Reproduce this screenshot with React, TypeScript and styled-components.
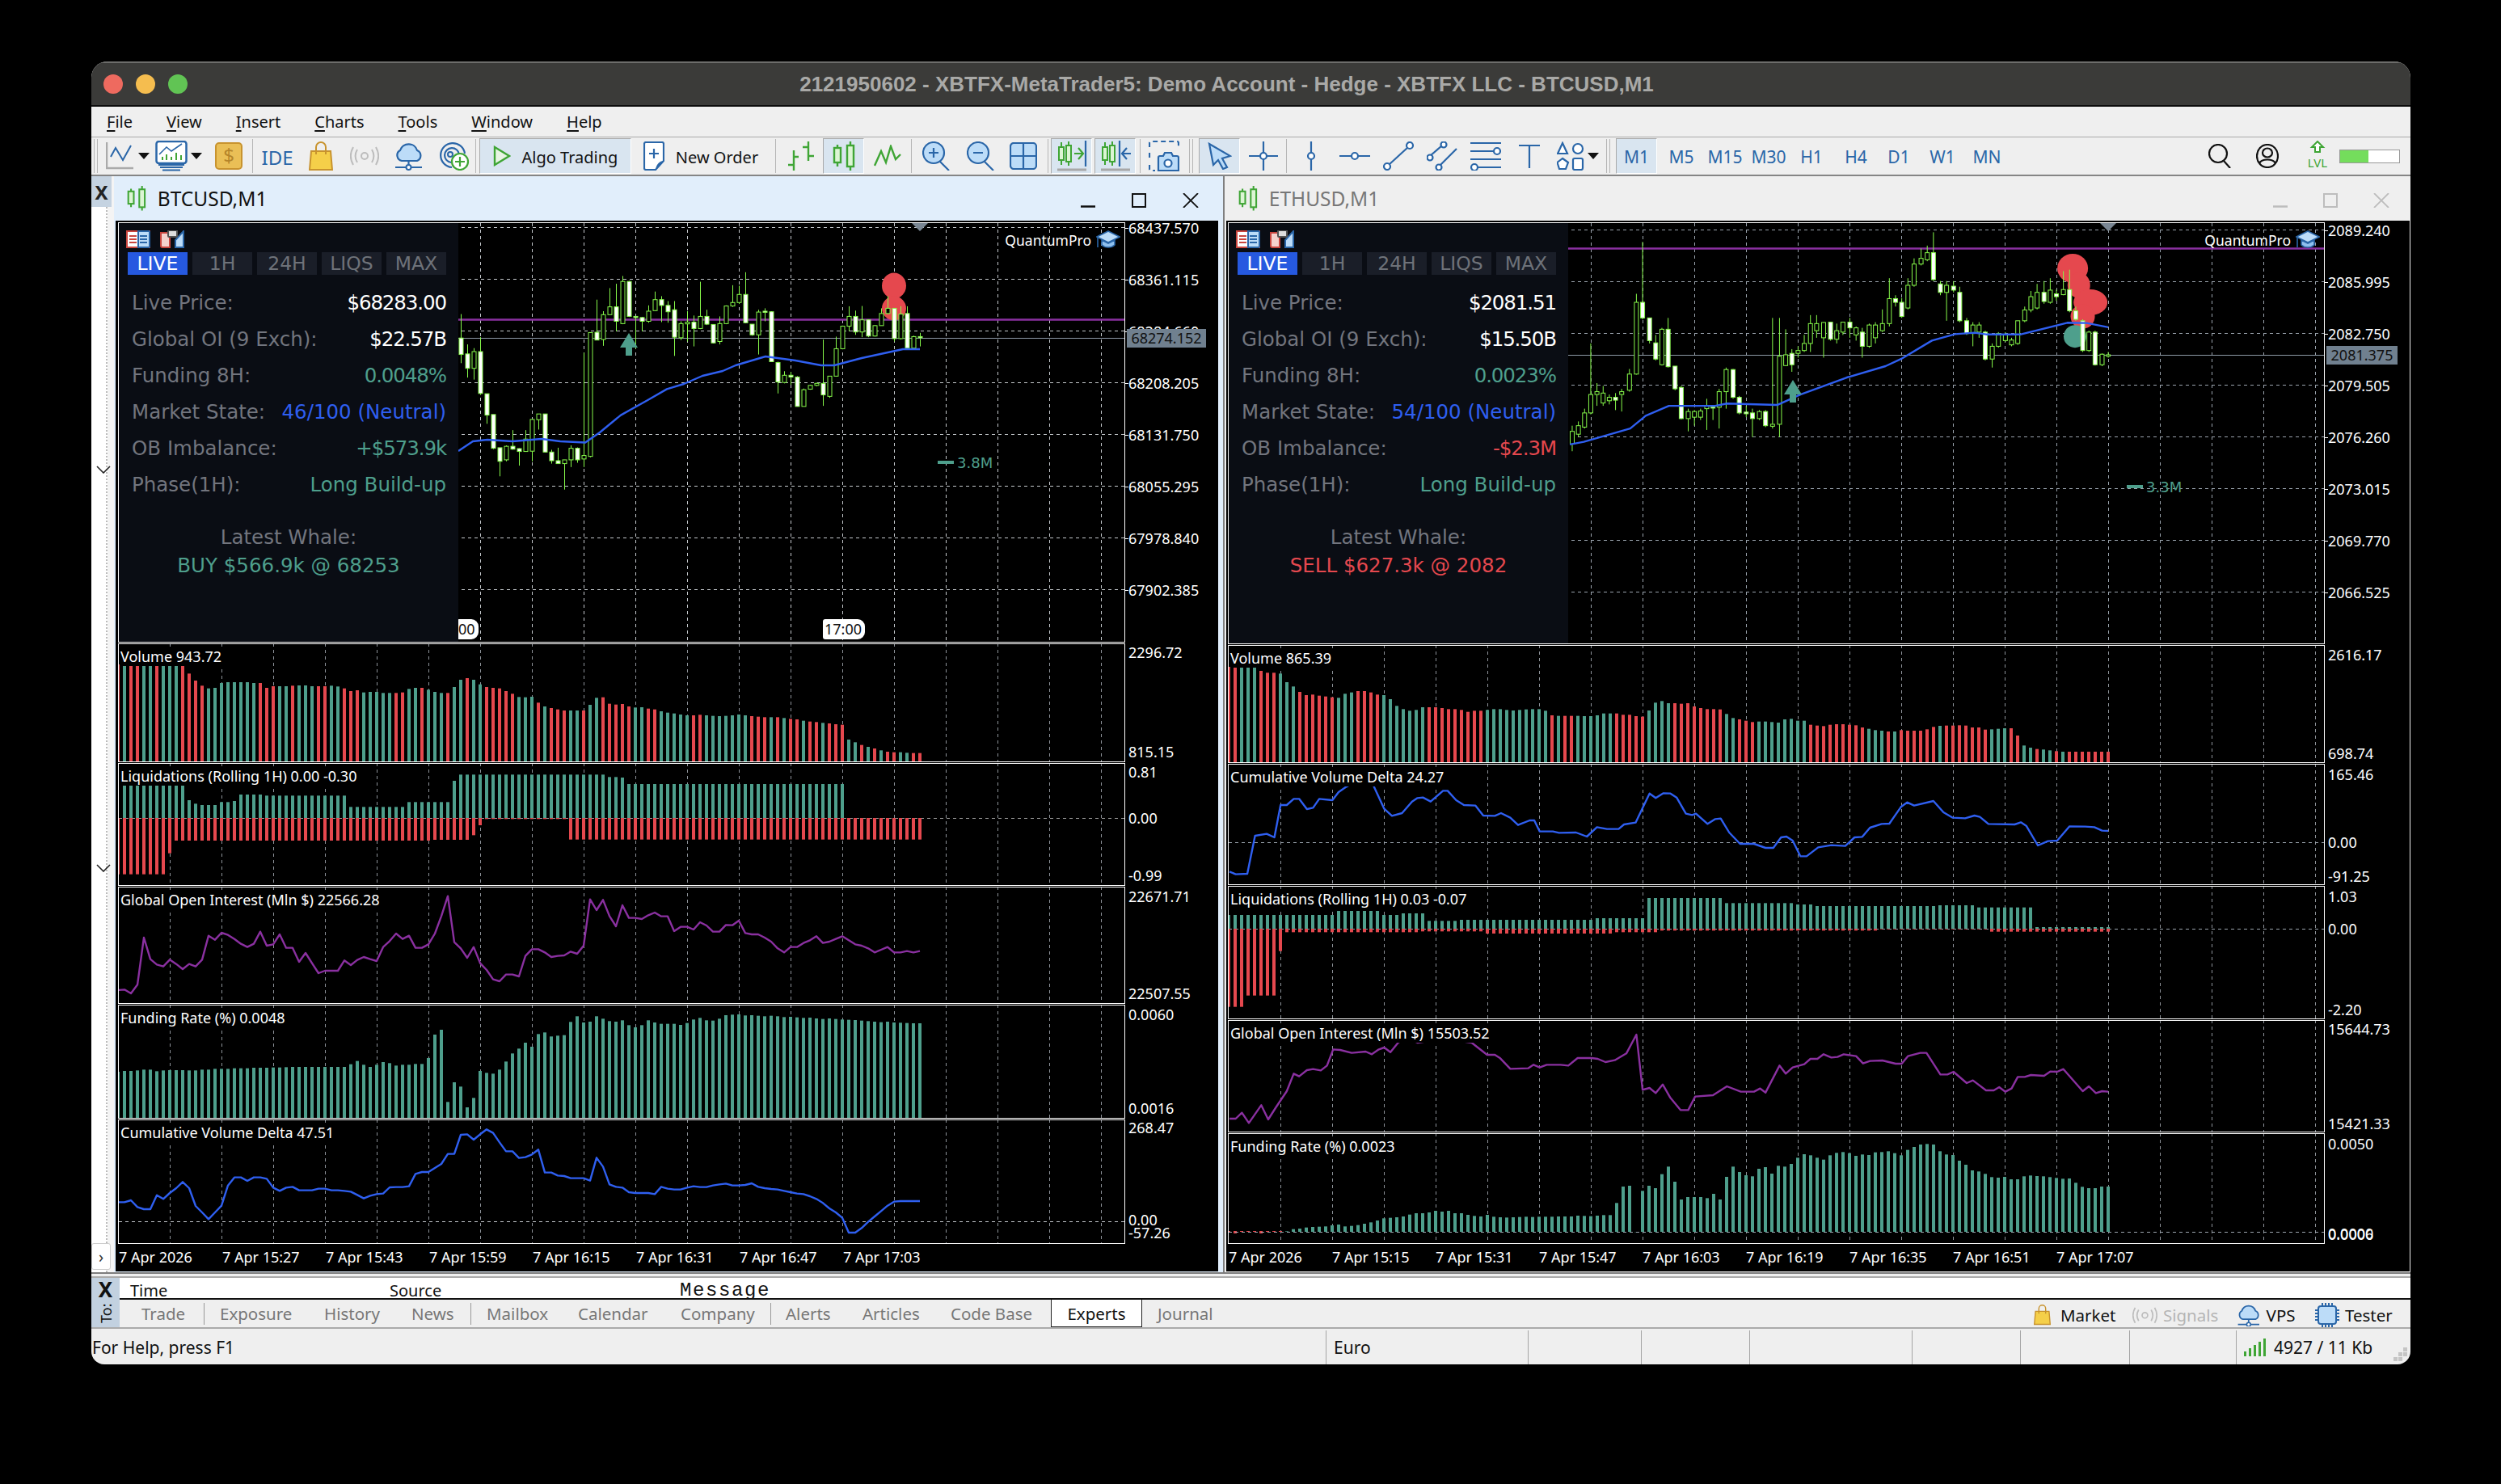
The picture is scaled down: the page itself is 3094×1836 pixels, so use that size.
import * as React from "react";
import styled, { createGlobalStyle } from "styled-components";

const UI = `"Noto Sans", "Liberation Sans", sans-serif`;
const PANEL = `"DejaVu Sans", "Noto Sans", sans-serif`;
const BLUE = "#2a66a8";
const LIGHT = "#bcdcf8";
const GREEN = "#3fa535";
const TEAL = "#4e9f8c";
const RED = "#e5484e";
const LINE_BLUE = "#2f5ff0";
const PURPLE = "#8a30a0";
const WICK = "#86f94a";

const GlobalStyle = createGlobalStyle`
  html, body { margin: 0; background: #000; }
  * { box-sizing: border-box; }
`;

const Page = styled.div`
  width: 3094px;
  height: 1836px;
  background: #000;
  padding: 76px 0 0 113px;
  overflow: hidden;
  font-family: ${UI};
`;

const Window = styled.div`
  width: 2869px;
  height: 1612px;
  display: flex;
  flex-direction: column;
  background: #efefef;
  border-radius: 20px 20px 16px 16px;
  overflow: hidden;
`;

const TitleBar = styled.div`
  height: 56px;
  flex: none;
  background: #3b3b39;
  border-top: 2px solid #6d6d6b;
  border-bottom: 2px solid #0c0c0c;
  display: flex;
  align-items: center;
  position: relative;
  color: #a9a9a7;
  font: bold 26px "Liberation Sans", sans-serif;
  justify-content: center;
  padding-right: 60px;
`;

const Lights = styled.div`
  position: absolute;
  left: 15px;
  top: 14px;
  display: flex;
  gap: 16px;
`;

const Light = styled.span<{ $c: string }>`
  width: 24px;
  height: 24px;
  border-radius: 50%;
  background: ${(p) => p.$c};
`;

const MenuBar = styled.div`
  height: 38px;
  flex: none;
  display: flex;
  align-items: center;
  gap: 42px;
  padding-left: 19px;
  font-size: 20px;
  color: #111;
  border-bottom: 1px solid #aaa;
  u { text-underline-offset: 3px; }
`;

const Toolbar = styled.div`
  height: 48px;
  flex: none;
  display: flex;
  align-items: center;
  border-bottom: 2px solid #858585;
`;

const Tool = styled.div<{ $ml: number; $w: number; $active?: boolean }>`
  flex: none;
  width: ${(p) => p.$w}px;
  height: 44px;
  margin-left: ${(p) => p.$ml}px;
  display: flex;
  align-items: center;
  justify-content: center;
  gap: ${(p) => (p.$w > 100 ? 14 : 4)}px;
  font-size: 20px;
  color: #111;
  background: ${(p) => (p.$active ? "#d9e5f0" : "transparent")};
  border-top: ${(p) => (p.$active ? "1px solid #a9a9a9" : "none")};
  border-left: ${(p) => (p.$active ? "1px solid #a9a9a9" : "none")};
  border-bottom: ${(p) => (p.$active ? "1px solid #fff" : "none")};
  border-right: ${(p) => (p.$active ? "1px solid #fff" : "none")};
  span { padding-top: 2px; }
`;

const Sep = styled.span`
  width: 1px;
  height: 42px;
  background: #b5b5b5;
`;

const Grip = styled.span`
  width: 5px;
  height: 42px;
  border-left: 1px solid #b5b5b5;
  border-right: 1px solid #b5b5b5;
`;

const BlueLabel = styled.span`
  color: ${BLUE};
  font-size: 21px;
  white-space: nowrap;
`;

const IdeLabel = styled(BlueLabel)`
  font-size: 24px;
`;

const LevelBar = styled.div`
  width: 75px;
  height: 17px;
  background: linear-gradient(90deg, #74dd5c 48%, #fff 48%);
  border: 1px solid #999;
`;

const Workspace = styled.div`
  height: 1358px;
  flex: none;
  display: flex;
  border-bottom: 2px solid #7d7d7d;
`;

const NavStrip = styled.div`
  width: 28px;
  flex: none;
  display: flex;
  flex-direction: column;
  background: #f4f4f4;
`;

const NavClose = styled.div`
  height: 38px;
  width: 25px;
  background: #c5d3e1;
  display: flex;
  align-items: center;
  justify-content: center;
  font: bold 24px ${UI};
  color: #222;
`;

const NavBody = styled.div`
  flex: 1;
  width: 20px;
  background: #fff;
  border-right: 2px dotted #bbb;
  display: flex;
  flex-direction: column;
  position: relative;
`;

const NavChevron = styled.svg<{ $mt: number }>`
  margin: ${(p) => p.$mt}px 0 0 6px;
  flex: none;
`;

const NavToggle = styled.div`
  margin-top: auto;
  margin-bottom: 3px;
  width: 24px;
  height: 33px;
  flex: none;
  background: #fff;
  border: 1px solid #ccc;
  border-radius: 3px;
  display: flex;
  align-items: center;
  justify-content: center;
  color: #333;
  font-size: 20px;
`;

const ChartWindow = styled.div<{ $w: number; $active?: boolean }>`
  width: ${(p) => p.$w}px;
  flex: none;
  display: flex;
  flex-direction: column;
  background: ${(p) => (p.$active ? "#e1eefb" : "#efefef")};
  border-left: ${(p) => (p.$active ? "none" : "2px solid #7f7f7f")};
`;

const TabBar = styled.div<{ $active?: boolean; $pl: number }>`
  height: 55px;
  flex: none;
  display: flex;
  align-items: center;
  padding-left: ${(p) => p.$pl}px;
  gap: 14px;
  font-size: 24.5px;
  color: ${(p) => (p.$active ? "#111" : "#777")};
`;

const WinButtons = styled.div<{ $gap: number; $pr: number }>`
  margin-left: auto;
  margin-right: ${(p) => p.$pr}px;
  display: flex;
  gap: ${(p) => p.$gap}px;
  padding-top: 4px;
`;

const Frame = styled.div<{ $ml: number; $pl: number; $w: number }>`
  height: 1300px;
  width: ${(p) => p.$w}px;
  flex: none;
  margin-left: ${(p) => p.$ml}px;
  padding: 2px 0 0 ${(p) => p.$pl}px;
  background: #000;
  display: flex;
  flex-direction: column;
`;

const PaneRow = styled.div<{ $h: number; $mb: number }>`
  height: ${(p) => p.$h}px;
  margin-bottom: ${(p) => p.$mb}px;
  flex: none;
  display: flex;
`;

const Plot = styled.div<{ $w: number }>`
  width: ${(p) => p.$w}px;
  height: 100%;
  flex: none;
  position: relative;
  border: 1px solid #fff;
  overflow: hidden;
  svg { display: block; }
`;

const PaneTitle = styled.div`
  position: absolute;
  left: 2px;
  top: 3px;
  padding-right: 3px;
  background: #000;
  color: #fff;
  font-size: 18px;
  line-height: 24px;
  white-space: nowrap;
`;

const Axis = styled.div`
  flex: 1;
  position: relative;
`;

const AxisLabel = styled.span<{ $y: number; $tick?: boolean }>`
  position: absolute;
  left: 0;
  top: ${(p) => p.$y - 13}px;
  padding-left: 4px;
  color: #fff;
  font-size: 18px;
  line-height: 26px;
  white-space: nowrap;
  &::before {
    content: "";
    display: ${(p) => (p.$tick ? "block" : "none")};
    position: absolute;
    left: 0;
    top: 13px;
    width: 4px;
    height: 1px;
    background: #fff;
  }
`;

const PriceTag = styled.span<{ $y: number; $w: number }>`
  position: absolute;
  left: 2px;
  top: ${(p) => p.$y}px;
  width: ${(p) => p.$w}px;
  height: 23px;
  background: #70808f;
  color: #111;
  font-size: 18px;
  line-height: 23px;
  text-align: center;
`;

const TimeAxis = styled.div<{ $pl: number }>`
  display: flex;
  padding-left: ${(p) => p.$pl}px;
  height: 30px;
  flex: none;
  color: #fff;
  font-size: 18px;
  line-height: 30px;
`;

const TimeCell = styled.span`
  width: 128px;
  flex: none;
  white-space: nowrap;
`;

const Panel = styled.div`
  position: absolute;
  left: 0;
  top: 0;
  bottom: 0;
  width: 420px;
  background: #0a0d14;
  padding: 9px 0 0 11px;
  font-family: ${PANEL};
  font-size: 24.5px;
`;

const PanelIcons = styled.div`
  display: flex;
  gap: 12px;
  height: 22px;
  margin-bottom: 5px;
  margin-left: -2px;
`;

const RangeTabs = styled.div`
  display: flex;
  gap: 6px;
  margin-bottom: 12px;
`;

const RangeTab = styled.span<{ $on?: boolean }>`
  width: 74px;
  height: 28px;
  display: flex;
  align-items: center;
  justify-content: center;
  background: ${(p) => (p.$on ? "#2659e0" : "#1a1e28")};
  color: ${(p) => (p.$on ? "#fff" : "#6e7279")};
  font-size: 23.5px;
`;

const StatRow = styled.div`
  width: 394px;
  height: 45px;
  padding-left: 5px;
  display: flex;
  align-items: center;
  justify-content: space-between;
  color: #72757e;
  white-space: nowrap;
`;

const StatValue = styled.span<{ $c: string; $tight?: boolean }>`
  color: ${(p) => p.$c};
  letter-spacing: ${(p) => (p.$tight ? "-1.1px" : "0")};
`;

const Whale = styled.div<{ $c: string }>`
  width: 398px;
  margin-top: 25px;
  text-align: center;
  line-height: 35px;
  color: #72757e;
  b { display: block; font-weight: normal; color: ${(p) => p.$c}; }
`;

const Brand = styled.div`
  position: absolute;
  right: 5px;
  top: 9px;
  display: flex;
  align-items: center;
  gap: 6px;
  color: #fff;
  font-size: 17.5px;
`;

const TimeTag = styled.span<{ $x: number }>`
  position: absolute;
  left: ${(p) => p.$x}px;
  bottom: 3px;
  height: 25px;
  padding: 0 4px 0 2px;
  background: #fff;
  color: #111;
  font-size: 18px;
  line-height: 25px;
  border-radius: 3px 9px 9px 3px;
`;

const Toolbox = styled.div`
  height: 65px;
  flex: none;
  margin-top: 3px;
  display: flex;
  border-top: 2px solid #aaa;
  border-bottom: 2px solid #aaa;
`;

const ToolboxSide = styled.div`
  width: 35px;
  flex: none;
  background: #c2d1e0;
  display: flex;
  flex-direction: column;
  align-items: center;
  color: #111;
`;

const ToolboxX = styled.span`
  font: bold 26px ${UI};
  line-height: 28px;
`;

const ToolboxName = styled.span`
  writing-mode: vertical-rl;
  transform: rotate(180deg);
  font-size: 18px;
  height: 26px;
  margin-top: 2px;
`;

const ToolboxMain = styled.div`
  flex: 1;
  display: flex;
  flex-direction: column;
`;

const LogHeader = styled.div`
  height: 27px;
  flex: none;
  background: #fff;
  border-bottom: 2px solid #111;
  display: flex;
  align-items: flex-end;
  padding-left: 13px;
  font-size: 20px;
  line-height: 24px;
  color: #111;
  overflow: hidden;
`;

const LogCol = styled.span<{ $w: number; $mono?: boolean }>`
  width: ${(p) => p.$w}px;
  flex: none;
  font-family: ${(p) => (p.$mono ? `"Liberation Mono", monospace` : "inherit")};
  font-size: ${(p) => (p.$mono ? 24 : 20)}px;
  letter-spacing: ${(p) => (p.$mono ? 1.6 : 0)}px;
  position: relative;
  top: 3px;
`;

const TabRow = styled.div`
  flex: 1;
  display: flex;
  align-items: center;
  font-size: 20.5px;
  color: #777;
`;

const BottomTab = styled.span<{ $ml: number; $w: number; $on?: boolean; $sep?: boolean; $low?: boolean }>`
  flex: none;
  width: ${(p) => p.$w}px;
  margin-left: ${(p) => p.$ml}px;
  height: ${(p) => (p.$sep ? 27 : 34)}px;
  line-height: 30px;
  white-space: nowrap;
  display: flex;
  align-items: center;
  gap: 7px;
  padding-top: ${(p) => (p.$low ? 4 : 0)}px;
  align-self: ${(p) => (p.$on ? "flex-start" : "center")};
  justify-content: ${(p) => (p.$on ? "center" : "flex-start")};
  color: ${(p) => (p.$on ? "#111" : "inherit")};
  background: ${(p) => (p.$on ? "#fff" : p.$sep ? "#999" : "transparent")};
  border: ${(p) => (p.$on ? "1px solid #222" : "none")};
  border-top: none;
`;

const DarkLabel = styled.span`
  color: #111;
`;

const MarketLabel = styled(DarkLabel)`
  margin-left: 5px;
`;

const GreyLabel = styled.span`
  color: #b5b5b5;
`;

const StatusBar = styled.div`
  flex: 1;
  display: flex;
  font-size: 21px;
  color: #111;
  position: relative;
  padding-top: 2px;
`;

const StatusCell = styled.div<{ $w: number; $first?: boolean }>`
  width: ${(p) => p.$w}px;
  flex: none;
  display: flex;
  align-items: center;
  gap: 9px;
  padding-left: ${(p) => (p.$first ? 1 : 9)}px;
  border-left: ${(p) => (p.$first ? "none" : "1px solid #a5a5a5")};
`;

const ResizeGrip = styled.svg`
  position: absolute;
  right: 3px;
  bottom: 3px;
`;

/* ---------- toolbar icons ---------- */
const Arrow = () => (
  <svg width="14" height="8" viewBox="0 0 14 8"><path d="M0 0H14L7 8Z" fill="#111" /></svg>
);

const IconChartType = () => (
  <svg width="36" height="36" viewBox="0 0 36 36" fill="none">
    <path d="M1 1V33H34" stroke="#aaa" strokeWidth="2.5" />
    <path d="M6 19L12 8L21 23L31 5" stroke={BLUE} strokeWidth="2" />
  </svg>
);
const IconTablet = () => (
  <svg width="40" height="38" viewBox="0 0 40 38" fill="none">
    <rect x="1.5" y="1" width="37" height="27" rx="3" fill="#fff" stroke={BLUE} strokeWidth="2.5" />
    <path d="M5 17L14 8L20 13L33 4" stroke={BLUE} strokeWidth="1.6" />
    <path d="M9 24V20M14 24V17M20 24V20M26 24V15M32 24V18" stroke={GREEN} strokeWidth="2" />
    <path d="M4 30H36M6 33H34M9 36.5H31" stroke={BLUE} strokeWidth="2" />
  </svg>
);
const IconDollar = () => (
  <svg width="34" height="34" viewBox="0 0 34 34">
    <rect x="1" y="1" width="32" height="32" rx="4" fill="#eabf56" stroke="#c8932e" strokeWidth="2" />
    <text x="17" y="25" textAnchor="middle" fontSize="24" fontFamily="Noto Sans" fill="#b5852a">$</text>
  </svg>
);
const IconBag = ({ s = 1 }: { s?: number }) => (
  <svg width={30 * s} height={36 * s} viewBox="0 0 30 36" fill="none">
    <path d="M3 12H27L29 35H1Z" fill="#f5cf49" stroke="#c8932e" strokeWidth="2" />
    <path d="M9 16V7A6 6 0 0 1 21 7V16" stroke="#c8932e" strokeWidth="2" />
  </svg>
);
const IconSignal = ({ s = 1 }: { s?: number }) => (
  <svg width={36 * s} height={24 * s} viewBox="0 0 36 24" fill="none" stroke="#bdbdbd" strokeWidth="2">
    <circle cx="18" cy="12" r="4" />
    <path d="M9 4C6 9 6 15 9 20M27 4C30 9 30 15 27 20M4 1C0 8 0 16 4 23M32 1C36 8 36 16 32 23" />
  </svg>
);
const IconCloud = ({ s = 1 }: { s?: number }) => (
  <svg width={37 * s} height={36 * s} viewBox="0 0 37 36" fill="none">
    <path d="M10 24A7 7 0 0 1 8 11A11 11 0 0 1 29 11A7 7 0 0 1 29 24Z" fill={LIGHT} stroke={BLUE} strokeWidth="2.2" />
    <path d="M18.5 24V30M2 32H15M22 32H35" stroke={BLUE} strokeWidth="2.2" />
    <circle cx="18.5" cy="32" r="3" fill="#fff" stroke={BLUE} strokeWidth="2" />
  </svg>
);
const IconGlobe = () => (
  <svg width="40" height="36" viewBox="0 0 40 36" fill="none">
    <path d="M18 32A15 15 0 1 1 34 15M17 26A9 9 0 1 1 27 16" stroke={BLUE} strokeWidth="2.2" />
    <circle cx="16" cy="16" r="3" stroke={BLUE} strokeWidth="2" />
    <circle cx="28" cy="25" r="10" fill="#fff" stroke={GREEN} strokeWidth="2.2" />
    <path d="M28 19V31M22 25H34" stroke={GREEN} strokeWidth="2.2" />
  </svg>
);
const IconPlay = () => (
  <svg width="22" height="26" viewBox="0 0 22 26"><path d="M2 2L20 13L2 24Z" fill="#e8f5e4" stroke={GREEN} strokeWidth="2.4" /></svg>
);
const IconOrder = () => (
  <svg width="26" height="36" viewBox="0 0 26 36" fill="none">
    <path d="M3 1H23A2 2 0 0 1 25 3V24L15 35H3A2 2 0 0 1 1 33V3A2 2 0 0 1 3 1Z" fill="#fff" stroke={BLUE} strokeWidth="2.2" />
    <path d="M25 24C20 24 16 28 15 35Z" fill={BLUE} />
    <path d="M13 9V21M7 15H19" stroke={BLUE} strokeWidth="2.2" />
  </svg>
);
const IconBars = () => (
  <svg width="34" height="36" viewBox="0 0 34 36" fill="none" stroke={GREEN} strokeWidth="2.4">
    <path d="M8 11V36M1 29H8M8 19H14M26 0V24M19 7H26M26 18H33" />
  </svg>
);
const IconCandles = ({ s = 1 }: { s?: number }) => (
  <svg width={28 * s} height={36 * s} viewBox="0 0 28 36" fill="#dcf5d4" stroke={GREEN} strokeWidth="2.4">
    <path d="M6 4V31M22 0V36" fill="none" />
    <rect x="2" y="8" width="8" height="18" />
    <rect x="18" y="5" width="8" height="26" />
  </svg>
);
const IconLine = () => (
  <svg width="34" height="28" viewBox="0 0 34 28" fill="none"><path d="M1 26L9 8L15 22L21 2L27 18L33 12" stroke={GREEN} strokeWidth="2.4" /></svg>
);
const IconZoom = ({ plus }: { plus?: boolean }) => (
  <svg width="34" height="36" viewBox="0 0 34 36" fill="none" stroke={BLUE} strokeWidth="2.2">
    <circle cx="14" cy="14" r="13" fill={LIGHT} />
    <path d="M22 25L33 36M8 14H20" />
    {plus && <path d="M14 8V20" />}
  </svg>
);
const IconGrid = () => (
  <svg width="34" height="34" viewBox="0 0 34 34" stroke={BLUE} strokeWidth="2.2" fill={LIGHT}>
    <rect x="1" y="1" width="32" height="32" rx="4" />
    <path d="M17 1V33M1 17H33" fill="none" />
  </svg>
);
const IconShift = ({ flip }: { flip?: boolean }) => (
  <svg width="38" height="38" viewBox="0 0 38 38" fill="none">
    <path d="M6 2V30M15 1V31" stroke={GREEN} strokeWidth="2" />
    <rect x="3" y="8" width="6" height="16" fill="#dcf5d4" stroke={GREEN} strokeWidth="2" />
    <rect x="12" y="6" width="6" height="20" fill="#dcf5d4" stroke={GREEN} strokeWidth="2" />
    {flip ? (
      <>
        <path d="M24 0V32" stroke={BLUE} strokeWidth="2.2" />
        <path d="M38 16H28M33 9L27 16L33 23" stroke={BLUE} strokeWidth="2.2" />
      </>
    ) : (
      <>
        <path d="M36 0V32" stroke={BLUE} strokeWidth="2.2" />
        <path d="M22 16H33M27 9L33 16L27 23" stroke={GREEN} strokeWidth="2.2" />
      </>
    )}
    <path d="M1 36H37" stroke="#a8a8a8" strokeWidth="3" />
  </svg>
);
const IconShot = () => (
  <svg width="38" height="38" viewBox="0 0 38 38" fill="none" stroke={BLUE} strokeWidth="2.2">
    <path d="M1 8V3A2 2 0 0 1 3 1H35A2 2 0 0 1 37 3V8M1 15V24M1 30V35A2 2 0 0 0 3 37H8" strokeDasharray="6 4" />
    <path d="M12 37V21A2 2 0 0 1 14 19H18L20 15H28L30 19H35A2 2 0 0 1 37 21V37Z" fill={LIGHT} />
    <circle cx="24" cy="28" r="4.5" fill="#fff" />
  </svg>
);
const IconCursor = () => (
  <svg width="30" height="34" viewBox="0 0 30 34"><path d="M2 2L28 17L18 20L24 31L19 33L13 22L7 28Z" fill={LIGHT} stroke={BLUE} strokeWidth="2.2" /></svg>
);
const IconCross = () => (
  <svg width="36" height="36" viewBox="0 0 36 36" fill="#fff" stroke={BLUE} strokeWidth="2.2">
    <path d="M18 0V36M0 18H36" /><circle cx="18" cy="18" r="4" />
  </svg>
);
const IconVLine = () => (
  <svg width="12" height="36" viewBox="0 0 12 36" fill="#fff" stroke={BLUE} strokeWidth="2.2">
    <path d="M6 0V36" /><circle cx="6" cy="18" r="4" />
  </svg>
);
const IconHLine = () => (
  <svg width="38" height="12" viewBox="0 0 38 12" fill="#fff" stroke={BLUE} strokeWidth="2.2">
    <path d="M0 6H38" /><circle cx="19" cy="6" r="4" />
  </svg>
);
const IconTrend = () => (
  <svg width="38" height="36" viewBox="0 0 38 36" fill="#fff" stroke={BLUE} strokeWidth="2.2">
    <path d="M7 29L31 7" /><circle cx="5" cy="31" r="4" /><circle cx="33" cy="5" r="4" />
  </svg>
);
const IconChannel = () => (
  <svg width="38" height="36" viewBox="0 0 38 36" fill="#fff" stroke={BLUE} strokeWidth="2.2">
    <path d="M4 18L19 5M16 30L37 9" /><circle cx="21" cy="4" r="3.5" /><circle cx="4" cy="20" r="3.5" /><circle cx="15" cy="32" r="3.5" />
  </svg>
);
const IconFibo = () => (
  <svg width="38" height="36" viewBox="0 0 38 36" fill="#fff" stroke={BLUE} strokeWidth="2.2">
    <path d="M0 2H38M0 12H30M0 22H38M8 32H38" /><circle cx="33" cy="12" r="4" /><circle cx="5" cy="32" r="4" />
  </svg>
);
const IconText = () => (
  <svg width="26" height="30" viewBox="0 0 26 30" fill="none" stroke={BLUE} strokeWidth="2.2"><path d="M0 2H26M13 2V30" /></svg>
);
const IconShapes = () => (
  <svg width="34" height="36" viewBox="0 0 34 36" fill="#fff" stroke={BLUE} strokeWidth="2.2">
    <path d="M7 2L13 15H1Z" /><circle cx="26" cy="9" r="6" /><path d="M7 21L14 26L11 34H3L0.5 26Z" /><rect x="20" y="21" width="12" height="14" rx="2" />
  </svg>
);
const IconSearch = () => (
  <svg width="28" height="30" viewBox="0 0 28 30" fill="none" stroke="#111" strokeWidth="2.2"><circle cx="12" cy="12" r="11" /><path d="M19 21L27 30" /></svg>
);
const IconUser = () => (
  <svg width="28" height="30" viewBox="0 0 28 30" fill="none" stroke="#111" strokeWidth="2.2">
    <ellipse cx="14" cy="15" rx="13" ry="14" /><ellipse cx="14" cy="11" rx="6" ry="5.5" /><path d="M4 24C7 18 21 18 24 24" />
  </svg>
);
const IconLevel = () => (
  <svg width="34" height="38" viewBox="0 0 34 38" fill="none">
    <path d="M17 1L24 8H20V14H14V8H10Z" stroke={GREEN} strokeWidth="2" fill="#fff" />
    <text x="17" y="33" textAnchor="middle" fontSize="15" fontFamily="Noto Sans" fill={GREEN}>LVL</text>
  </svg>
);
const IconChip = () => (
  <svg width="30" height="30" viewBox="0 0 30 30" fill={LIGHT} stroke={BLUE} strokeWidth="2">
    <rect x="4" y="4" width="22" height="22" rx="3" />
    <path d="M9 0V4M13 0V4M17 0V4M21 0V4M9 26V30M13 26V30M17 26V30M21 26V30M0 9H4M0 13H4M0 17H4M0 21H4M26 9H30M26 13H30M26 17H30M26 21H30" fill="none" />
  </svg>
);
const IconBarsSignal = () => (
  <svg width="28" height="22" viewBox="0 0 28 22" fill={GREEN}>
    <rect x="0" y="16" width="3" height="6" /><rect x="6" y="12" width="3" height="10" /><rect x="12" y="8" width="3" height="14" /><rect x="18" y="4" width="3" height="18" /><rect x="24" y="0" width="3" height="22" />
  </svg>
);
const IconTable = () => (
  <svg width="30" height="22" viewBox="0 0 30 22">
    <rect x="1" y="1" width="28" height="20" fill="#fff" stroke="#c9463f" strokeWidth="2" />
    <path d="M15 1H28a1 1 0 0 1 1 1V20a1 1 0 0 1-1 1H15Z" fill={LIGHT} stroke={BLUE} strokeWidth="2" />
    <path d="M4 7H13M4 11H13M4 15H13" stroke="#c9463f" strokeWidth="2" />
    <path d="M17 7H26M17 11H26M17 15H26" stroke={BLUE} strokeWidth="2" />
  </svg>
);
const IconSave = () => (
  <svg width="30" height="22" viewBox="0 0 30 22">
    <path d="M1 3H12V21H3A2 2 0 0 1 1 19Z" fill="#f5d2cd" stroke="#c9463f" strokeWidth="2" />
    <path d="M19 12L29 1V21H19Z" fill={LIGHT} stroke={BLUE} strokeWidth="2" />
    <rect x="10" y="0" width="11" height="8" rx="1" fill="#ddd" stroke="#555" strokeWidth="2" />
  </svg>
);
const IconHat = () => (
  <svg width="30" height="24" viewBox="0 0 30 24" fill="none">
    <path d="M15 1L29 8L15 15L1 8Z" fill={LIGHT} stroke={BLUE} strokeWidth="1.6" />
    <path d="M7 12V18C11 22 19 22 23 18V12L15 16Z" fill="#8fc0ee" stroke={BLUE} strokeWidth="1.6" />
    <path d="M2 9V21" stroke={BLUE} strokeWidth="1.6" />
  </svg>
);
const IconMin = ({ c }: { c: string }) => (
  <svg width="18" height="18" viewBox="0 0 18 18"><path d="M0 16.5H18" stroke={c} strokeWidth="2.5" /></svg>
);
const IconMax = ({ c }: { c: string }) => (
  <svg width="18" height="18" viewBox="0 0 18 18"><rect x="1" y="1" width="16" height="16" fill="none" stroke={c} strokeWidth="2" /></svg>
);
const IconClose = ({ c }: { c: string }) => (
  <svg width="20" height="18" viewBox="0 0 20 18"><path d="M1 0L19 18M19 0L1 18" stroke={c} strokeWidth="1.8" /></svg>
);

/* ---------- chart data, in reference crop units ---------- */
const at = (a: number[], i: number, n: number) => a[Math.round((i * (a.length - 1)) / (n - 1))];
const runAt = (runs: number[][], k: number) => (runs.find((r) => k <= r[0]) ?? runs[runs.length - 1])[1];

const leftN = 125;
const lx = (i: number) => 146 + 8 * i;
const rightN = 137;
const rx = (i: number) => 1520 + 8 * i;
const rz = (x: number) => 1500 + x / 1.045;
const rKey = (i: number) => (rx(i) - 1500) * 1.045;

const lVol = [66,66,66,66,66,66,66,66,66,66,66,100,126,145,155,153,135,132,132,132,132,135,135,153,147,147,147,145,144,144,147,147,147,145,148,155,165,162,170,168,168,172,172,172,170,157,153,153,160,168,172,172,150,123,117,123,140,150,153,155,165,175,187,188,186,208,222,228,233,237,237,237,237,216,190,188,212,215,213,222,226,225,230,233,240,245,248,252,255,255,253,255,257,258,257,255,252,255,258,260,262,262,262,265,268,270,275,278,280,283,285,288,290,345,355,365,372,378,385,390,392,392,394,395,395];
const lVolC = "RGRRGGRGGGRRRRGGGGGGGGRRRGGRGGGRRGGRRRGGGGGRRGGRGGGRGGRGGRRRRRGGGRGRRRGGRGGRRRRRGGRRGGGGGRRGGGGGGGRRRGRGRRGRRGRRRGGRGRGRRGG";
const lLiqG = [[0,637],[10,513],[11,570],[12,583],[15,588],[17,577],[18,573],[22,549],[35,553],[44,595],[51,577],[52,498],[75,475],[77,484],[78,486],[112,510],[124,637]];
const lLiqR = [[7,845],[8,767],[48,720],[54,717],[55,700],[56,663],[69,640],[124,716]];
const lGoi = [1275,1273,1287,1255,1080,1160,1180,1187,1162,1178,1197,1178,1187,1162,1073,1088,1062,1070,1085,1103,1115,1103,1058,1110,1105,1068,1118,1118,1170,1137,1175,1212,1203,1203,1203,1165,1182,1163,1152,1160,1167,1115,1093,1065,1085,1073,1118,1118,1105,1065,1000,926,1097,1120,1155,1115,1175,1200,1235,1242,1217,1217,1224,1148,1123,1123,1135,1152,1148,1146,1132,1140,1110,938,978,940,1000,1038,960,1007,1007,1011,997,987,1001,1001,1056,1040,1040,1050,1023,1035,1058,1058,1033,1034,1017,1063,1068,1068,1080,1095,1120,1135,1115,1115,1100,1090,1075,1100,1095,1085,1075,1090,1105,1110,1120,1135,1125,1115,1135,1135,1130,1135,1130];
const lFund = [258,255,255,253,250,250,256,253,252,252,252,253,253,250,250,247,247,247,245,245,245,243,243,243,242,242,241,240,240,240,240,240,240,240,240,240,230,218,232,240,232,222,226,235,232,232,229,229,207,120,102,370,297,313,390,355,255,262,265,250,220,190,172,150,165,118,112,127,124,122,73,52,75,72,52,61,70,72,67,85,93,85,67,75,80,80,80,84,77,64,58,67,68,61,48,46,45,49,48,50,52,50,52,55,54,56,58,57,60,62,60,62,64,65,66,68,70,72,74,72,75,76,77,78,78];
const lCvd = [742,742,735,760,768,768,716,730,708,690,667,690,756,780,805,780,755,680,650,650,663,650,650,655,688,700,688,685,698,698,698,692,692,698,698,700,703,715,728,718,712,710,687,686,686,683,637,630,630,615,600,563,563,492,490,510,490,472,485,520,553,553,578,575,565,547,632,632,643,645,653,653,653,662,577,610,676,685,688,705,708,708,708,712,685,692,695,695,688,683,686,686,680,676,673,680,680,678,672,685,690,693,695,700,705,710,712,720,730,745,765,780,800,855,855,838,815,795,775,755,740,738,738,738,738];

const lC45 = (z: number) => 260 + z / 2.8;
const lCandles = [
  [360,530,443,500,1],[465,580,498,548,1],[478,587,490,548,0],[440,640,490,635,1],[636,740,636,710,1],[708,828,708,825,1],[823,922,823,870,1],[815,870,818,865,0],[762,830,818,828,1],[825,885,826,836,1],[762,836,793,836,0],[725,870,725,835,0],[706,760,706,726,0],[706,838,706,838,1],[830,878,838,868,1],[823,878,868,878,1],[865,968,865,878,0],[815,890,825,865,0],[822,875,825,865,1],[494,890,850,862,0],[424,856,424,853,0],[310,450,423,450,1],[350,470,362,448,0],[270,362,335,362,0],[255,420,335,385,1],[228,395,247,393,0],[245,370,247,368,1],[368,480,368,372,1],[370,420,372,385,1],[330,390,350,385,0],
  [282,350,310,348,0],[298,388,310,330,1],[315,390,330,352,1],[315,505,345,440,1],[385,450,393,442,0],[350,455,388,394,0],[365,472,388,410,1],[248,412,368,410,0],[345,398,368,395,1],[395,462,396,460,1],[368,465,393,455,0],[330,395,332,393,0],[260,335,320,332,0],[262,325,292,320,0],[215,392,292,390,1],[395,435,395,432,1],[345,500,353,432,0],[340,385,350,354,1],[350,525,352,525,1],[525,635,528,595,1],[558,600,572,597,0],[560,605,572,578,1],[575,680,578,680,1],[618,680,622,680,0],[605,622,607,620,0],[598,610,600,607,0],[448,678,600,640,1],[575,650,575,645,0],[438,576,480,575,0],[400,482,402,480,0],[333,420,368,402,0],[348,432,368,422,1],[332,440,380,422,0],[378,440,380,436,1],[398,438,400,436,0],[340,400,358,400,0],[298,360,340,358,0],[340,455,340,445,1],[333,448,360,445,0],[333,478,358,478,1],[435,480,438,478,0],[425,472,438,442,1],
];
const lMa = [[567,558],[585,546],[603,544],[634,546],[670,543],[693,546],[724,547.5],[742,535],[768,513.6],[800,495.7],[825,481.4],[846,475],[869,465],[894,459],[910,452],[947,441],[984,446],[1016,452],[1032,452],[1066,443],[1103,435],[1117,432],[1138,432]];

const rVol = [105,105,105,105,105,120,127,130,162,178,198,210,208,212,215,218,220,205,200,195,200,208,210,225,250,262,268,265,255,255,255,258,262,265,272,268,268,265,262,262,265,267,265,263,262,268,285,287,287,287,287,288,288,285,278,278,278,283,288,290,267,238,232,240,240,242,240,252,258,262,263,280,295,300,305,310,308,308,310,312,300,298,305,320,323,325,320,318,318,320,322,330,335,340,342,345,340,342,342,342,337,328,324,323,323,322,323,330,338,337,335,333,333,360,397,405,410,412,415,418,420,420,420,420,420,420,420];
const rVolC = "RRGGGRRRGGGRRRRRRGGGRRRRGGGGGGGRRRRRRRRRGGGGGGGGGGRGRRGGGGGGRRRRRGGGGRRRRRRRRGGRRRGGGGGGGGRRRRRRRRRGGGRGRRRRRRGRRRRRRRGGGRRGGRGGRGRR";
const rCvd = [[22,865],[30,875],[45,873],[55,732],[70,725],[80,738],[88,618],[96,618],[105,595],[112,595],[122,633],[130,628],[138,595],[155,600],[163,570],[172,552],[190,525],[208,545],[222,632],[232,658],[245,648],[258,605],[265,592],[272,590],[282,605],[298,565],[304,565],[315,600],[325,618],[340,620],[350,657],[365,658],[373,648],[385,665],[395,692],[410,675],[416,675],[423,716],[440,716],[448,721],[470,720],[484,735],[497,700],[510,707],[525,707],[532,690],[547,683],[565,575],[573,592],[583,574],[592,575],[600,590],[612,650],[620,655],[625,650],[640,688],[650,670],[657,668],[668,720],[682,762],[700,762],[715,777],[725,777],[735,738],[742,735],[750,750],[760,808],[768,808],[783,775],[800,767],[818,770],[830,738],[840,736],[850,702],[865,688],[875,687],[890,625],[898,608],[907,620],[932,603],[945,645],[957,665],[973,667],[985,657],[992,662],[1003,688],[1037,690],[1045,682],[1052,695],[1067,768],[1080,752],[1092,750],[1108,697],[1128,698],[1140,700],[1150,713],[1158,714]];
const rLiqG = [[155,1026],[215,1011],[240,1026],[275,1020],[315,1048],[490,1044],[557,1038],[660,963],[750,982],[775,987],[935,993],[990,990],[1060,998],[1160,1071],[9999,1078]];
const rLiqR = [[45,1367],[82,1325],[88,1160],[270,1090],[350,1087],[520,1095],[575,1090],[860,1084],[1000,1079],[1160,1088]];
const rGoi = [[22,342],[30,342],[38,320],[47,358],[63,292],[72,345],[82,300],[96,240],[105,175],[112,185],[122,162],[130,158],[140,163],[148,145],[156,85],[165,87],[180,98],[198,93],[206,103],[215,85],[222,78],[230,95],[240,60],[250,40],[265,60],[300,45],[335,60],[355,105],[365,105],[372,118],[385,157],[408,155],[415,142],[423,152],[432,142],[450,142],[460,145],[472,117],[490,117],[498,120],[508,132],[520,125],[535,100],[548,30],[556,235],[565,228],[573,247],[582,215],[592,265],[605,310],[615,310],[624,260],[647,255],[665,222],[683,242],[700,242],[708,230],[715,245],[733,145],[741,175],[750,152],[765,140],[773,120],[782,120],[790,103],[800,115],[808,113],[816,103],[832,110],[841,137],[850,128],[866,126],[883,138],[891,138],[899,110],[915,98],[923,98],[941,178],[950,178],[958,168],[975,210],[983,200],[1000,237],[1010,237],[1017,225],[1025,242],[1033,230],[1041,187],[1050,187],[1058,180],[1075,183],[1083,167],[1092,168],[1100,158],[1125,240],[1133,222],[1142,247],[1150,240],[1158,242]];
const rFund = [760,752,750,746,744,743,742,738,735,742,740,737,732,727,720,712,710,708,705,698,693,693,690,684,687,684,693,693,699,703,705,699,706,708,709,708,707,706,707,706,706,706,705,705,705,702,703,704,702,700,700,655,594,591,763,610,591,600,548,520,576,642,633,633,633,637,621,642,558,520,540,552,556,528,522,546,517,520,510,487,474,478,487,494,478,469,466,470,480,475,477,467,466,463,470,478,458,447,438,436,438,463,475,477,498,513,534,538,547,559,561,558,567,567,556,553,555,556,559,562,565,564,580,595,600,600,594,594];
const rC10 = (z: number) => 260 + z / 2.85;
const rCandles = [
  [465,760,850,780,825,0],[473,745,800,760,790,0],[481,700,770,715,765,0],[489,470,720,650,715,0],[497,610,690,640,650,0],[505,620,690,645,680,0],[513,650,685,660,672,0],[521,645,705,660,670,1],[529,630,710,640,650,0],[539,560,640,578,635,0],[548,295,580,325,578,0],[556,112,385,325,380,1],[565,380,470,380,460,1],[573,440,530,468,525,1],[581,415,548,420,545,0],[589,380,555,420,552,1],[598,550,635,550,630,1],[606,620,738,625,735,1],[615,700,780,710,735,0],[623,705,760,710,730,0],[631,700,740,708,730,0],[639,665,775,690,700,0],[647,690,740,693,698,1],[655,630,770,640,695,0],[664,555,700,562,640,0],[673,560,665,562,660,1],[681,655,720,660,715,1],[690,690,730,712,718,1],[698,700,800,715,735,1],[707,705,740,710,735,0],[715,705,765,710,760,1],[724,380,770,755,762,0],[733,380,800,515,755,0],[741,420,550,510,548,0],[749,490,570,505,545,1],[757,480,520,495,505,0],[765,440,500,470,495,0],[773,370,500,400,470,0],[781,370,450,400,425,0],[790,395,520,396,450,0],[799,395,460,395,455,1],[807,400,470,425,455,0],[815,395,440,395,430,0],[824,380,450,395,415,1],[832,410,460,415,440,0],[840,415,520,430,480,1],[849,400,485,405,480,0],[857,395,470,405,450,0],[866,350,430,400,425,0],[875,240,410,312,400,0],[883,300,340,312,325,1],[891,310,380,325,375,1],[899,240,350,265,345,0],[907,170,270,190,265,0],[916,135,195,170,190,0],[924,125,180,150,175,0],[932,78,250,150,245,1],[941,250,300,260,290,1],[949,250,390,265,290,0],[958,250,290,268,282,1],[966,270,395,290,390,1],[975,380,440,390,435,1],[983,395,480,405,435,0],[991,395,450,405,430,0],[999,425,530,430,525,1],[1008,470,555,480,525,0],[1016,430,485,435,480,0],[1025,430,465,440,460,0],[1033,450,480,458,475,0],[1041,390,475,390,470,0],[1050,340,395,352,390,0],[1058,285,360,305,352,0],[1066,260,350,290,345,0],[1075,250,330,290,322,1],[1083,240,330,282,325,0],[1091,280,320,295,305,1],[1100,215,300,280,298,0],[1108,210,360,280,355,1],[1116,340,390,355,385,1],[1125,385,500,390,495,1],[1133,425,500,430,495,0],[1141,425,548,430,545,1],[1150,505,550,508,545,0],[1158,500,520,510,515,0],
];
const rMa = [[462,826],[480,817],[540,770],[560,725],[590,690],[650,690],[665,682],[730,687],[760,650],[820,590],[870,550],[890,525],[930,460],[960,437],[985,432],[1000,438],[1045,438],[1105,397],[1130,398],[1158,413]];

/* ---------- chart drawing ---------- */
const range = (n: number) => Array.from({ length: n }, (_, i) => i);
const pts = (p: number[][]) => p.map((q) => q.join(",")).join(" ");

const GridV = ({ xs, y0, y1, c = "#8d9299" }: { xs: number[]; y0: number; y1: number; c?: string }) => (
  <path d={xs.map((x) => `M${x} ${y0}V${y1}`).join("")} stroke={c} strokeDasharray="4 4" fill="none" />
);
const GridH = ({ ys, x0, x1, c = "#c4c8cc" }: { ys: number[]; x0: number; x1: number; c?: string }) => (
  <path d={ys.map((y) => `M${x0} ${y}H${x1}`).join("")} stroke={c} strokeDasharray="4 4" fill="none" />
);
const Bar = ({ x, a, b, c }: { x: number; a: number; b: number; c: string }) => (
  <rect x={x - 2} y={Math.min(a, b)} width={4} height={Math.abs(b - a)} fill={c} />
);
const Line = ({ p, c }: { p: number[][]; c: string }) => (
  <polyline points={pts(p)} stroke={c} strokeWidth={2.4} fill="none" strokeLinejoin="round" />
);
const Candle = ({ x, wt, wb, bt, bb, bear }: { x: number; wt: number; wb: number; bt: number; bb: number; bear: boolean }) => (
  <g>
    <path d={`M${x} ${wt}V${wb}`} stroke={WICK} />
    <rect x={x - 2.5} y={bt} width={5} height={Math.max(bb - bt, 1)} fill={bear ? "#fff" : "#000"} stroke={WICK} />
  </g>
);
const UpArrow = ({ x, y0, y1 }: { x: number; y0: number; y1: number }) => (
  <path d={`M${x} ${y0}L${x + 11} ${y0 + 18}H${x + 4}V${y1}H${x - 4}V${y0 + 18}H${x - 11}Z`} fill={TEAL} />
);
const VolumeMark = ({ x, y, t }: { x: number; y: number; t: string }) => (
  <g>
    <rect x={x} y={y - 2} width={20} height={4} fill={TEAL} />
    <text x={x + 24} y={y + 7} fill={TEAL} fontSize={18} fontFamily="DejaVu Sans">{t}</text>
  </g>
);
const Marker = ({ x }: { x: number }) => <path d={`M${x - 10} 276H${x + 10}L${x} 286Z`} fill="#7a8794" />;

const View = ({ x, y, w, h, children }: { x: number; y: number; w: number; h: number; children: React.ReactNode }) => (
  <svg width={w} height={h} viewBox={`${x} ${y} ${w} ${h}`}>{children}</svg>
);

const leftGrid = range(20).map((i) => 1362.5 - 64 * i).filter((x) => x > 148);
const rightGrid = range(21).map((i) => 2864.5 - 64 * i).filter((x) => x > 1522);
const leftMainY = [281.5, 345.5, 409.5, 473.5, 537.5, 601.5, 665.5, 729.5];
const rightMainY = [284.5, 348.5, 412.5, 476.5, 540.5, 604.5, 668.5, 732.5];

type PaneDef = { top: number; next: number; title: string; labels: [string, number][]; body: React.ReactNode };
const LEFT_X = 147;
const LEFT_W = 1244;
const RIGHT_X = 1520;
const RIGHT_W = 1355;

const leftPanes: PaneDef[] = [
  {
    top: 796, next: 944, title: "Volume 943.72", labels: [["2296.72", 807], ["815.15", 930]],
    body: (
      <>
        <GridV xs={leftGrid} y0={796} y1={943} />
        {range(leftN).map((i) => <Bar key={i} x={lx(i)} a={800 + at(lVol, i, leftN) / 3} b={943} c={lVolC[i] === "G" ? TEAL : RED} />)}
      </>
    ),
  },
  {
    top: 944, next: 1097, title: "Liquidations (Rolling 1H) 0.00 -0.30", labels: [["0.81", 955], ["0.00", 1012], ["-0.99", 1083]],
    body: (
      <>
        <GridV xs={leftGrid} y0={944} y1={1096} />
        <GridH ys={[1012.5]} x0={147} x1={1391} c="#999" />
        {range(leftN).map((i) => (
          <g key={i}>
            <Bar x={lx(i)} a={800 + runAt(lLiqG, i) / 3} b={1012} c={TEAL} />
            <Bar x={lx(i)} a={1012} b={800 + runAt(lLiqR, i) / 3} c={RED} />
          </g>
        ))}
      </>
    ),
  },
  {
    top: 1097, next: 1243, title: "Global Open Interest (Mln $) 22566.28", labels: [["22671.71", 1109], ["22507.55", 1229]],
    body: (
      <>
        <GridV xs={leftGrid} y0={1097} y1={1242} />
        <Line p={lGoi.map((z, i) => [lx(i), 800 + z / 3])} c={PURPLE} />
      </>
    ),
  },
  {
    top: 1243, next: 1385, title: "Funding Rate (%) 0.0048", labels: [["0.0060", 1255], ["0.0016", 1371]],
    body: (
      <>
        <GridV xs={leftGrid} y0={1243} y1={1384} />
        {range(leftN).map((i) => <Bar key={i} x={lx(i)} a={1240 + at(lFund, i, leftN) / 3} b={1384} c={TEAL} />)}
      </>
    ),
  },
  {
    top: 1385, next: 1540, title: "Cumulative Volume Delta 47.51", labels: [["268.47", 1395], ["0.00", 1509], ["-57.26", 1525]],
    body: (
      <>
        <GridV xs={leftGrid} y0={1385} y1={1539} />
        <GridH ys={[1511.5]} x0={147} x1={1391} />
        <Line p={range(leftN).map((i) => [lx(i), 1240 + at(lCvd, i, leftN) / 3])} c={LINE_BLUE} />
      </>
    ),
  },
];

const rightPanes: PaneDef[] = [
  {
    top: 798, next: 945, title: "Volume 865.39", labels: [["2616.17", 810], ["698.74", 932]],
    body: (
      <>
        <GridV xs={rightGrid} y0={798} y1={944} />
        {range(rightN).map((i) => <Bar key={i} x={rx(i)} a={790 + at(rVol, i, rightN) / 3} b={944} c={rVolC[i] === "G" ? TEAL : RED} />)}
      </>
    ),
  },
  {
    top: 945, next: 1096, title: "Cumulative Volume Delta 24.27", labels: [["165.46", 958], ["0.00", 1042], ["-91.25", 1084]],
    body: (
      <>
        <GridV xs={rightGrid} y0={945} y1={1095} />
        <GridH ys={[1042.5]} x0={1520} x1={2875} c="#9aa3ad" />
        <Line p={rCvd.map(([x, z]) => [rz(x), 790 + z / 3])} c={LINE_BLUE} />
      </>
    ),
  },
  {
    top: 1096, next: 1262, title: "Liquidations (Rolling 1H) 0.03 -0.07", labels: [["1.03", 1109], ["0.00", 1149], ["-2.20", 1249]],
    body: (
      <>
        <GridV xs={rightGrid} y0={1096} y1={1261} />
        <GridH ys={[1149.5]} x0={1520} x1={2875} c="#9aa3ad" />
        {range(rightN).map((i) => (
          <g key={i}>
            <Bar x={rx(i)} a={790 + runAt(rLiqG, rKey(i)) / 3} b={1149} c={TEAL} />
            <Bar x={rx(i)} a={1149} b={790 + runAt(rLiqR, rKey(i)) / 3} c={RED} />
          </g>
        ))}
      </>
    ),
  },
  {
    top: 1262, next: 1402, title: "Global Open Interest (Mln $) 15503.52", labels: [["15644.73", 1273], ["15421.33", 1390]],
    body: (
      <>
        <GridV xs={rightGrid} y0={1262} y1={1401} />
        <Line p={rGoi.map(([x, z]) => [rz(x), 1270 + z / 3])} c={PURPLE} />
      </>
    ),
  },
  {
    top: 1402, next: 1540, title: "Funding Rate (%) 0.0023", labels: [["0.0050", 1415], ["0.0000", 1526], ["0.0006", 1527]],
    body: (
      <>
        <GridV xs={rightGrid} y0={1402} y1={1539} />
        {range(9).map((i) => <rect key={i} x={rx(i) - 2} y={1523} width={4} height={i % 4 === 1 ? 3 : 1} fill={RED} />)}
        {range(rFund.length).map((i) => {
          const a = 1270 + rFund[i] / 3;
          return <Bar key={i} x={rx(9 + i)} a={a} b={1524} c={TEAL} />;
        })}
        <GridH ys={[1524.5]} x0={1520} x1={2875} c="#9aa3ad" />
      </>
    ),
  },
];

const Pane = ({ def, x, w, plotW }: { def: PaneDef; x: number; w: number; plotW: number }) => {
  const h = def.next - def.top - 1;
  return (
    <PaneRow $h={h} $mb={1}>
      <Plot $w={plotW}>
        <View x={x} y={def.top + 1} w={w} h={h - 2}>{def.body}</View>
        <PaneTitle>{def.title}</PaneTitle>
      </Plot>
      <Axis>
        {def.labels.map(([t, y]) => <AxisLabel key={t} $y={y - def.top}>{t}</AxisLabel>)}
      </Axis>
    </PaneRow>
  );
};

type Stat = { label: string; value: string; c: string; tight?: boolean };
const StatsPanel = ({ stats, whale, whaleC }: { stats: Stat[]; whale: string; whaleC: string }) => (
  <Panel>
    <PanelIcons><IconTable /><IconSave /></PanelIcons>
    <RangeTabs>
      <RangeTab $on>LIVE</RangeTab>
      <RangeTab>1H</RangeTab>
      <RangeTab>24H</RangeTab>
      <RangeTab>LIQS</RangeTab>
      <RangeTab>MAX</RangeTab>
    </RangeTabs>
    {stats.map((s) => (
      <StatRow key={s.label}>
        <span>{s.label}</span>
        <StatValue $c={s.c} $tight={s.tight}>{s.value}</StatValue>
      </StatRow>
    ))}
    <Whale $c={whaleC}>Latest Whale:<b>{whale}</b></Whale>
  </Panel>
);

const btcStats: Stat[] = [
  { label: "Live Price:", value: "$68283.00", c: "#fff", tight: true },
  { label: "Global OI (9 Exch):", value: "$22.57B", c: "#fff", tight: true },
  { label: "Funding 8H:", value: "0.0048%", c: TEAL, tight: true },
  { label: "Market State:", value: "46/100 (Neutral)", c: LINE_BLUE },
  { label: "OB Imbalance:", value: "+$573.9k", c: TEAL, tight: true },
  { label: "Phase(1H):", value: "Long Build-up", c: TEAL },
];
const ethStats: Stat[] = [
  { label: "Live Price:", value: "$2081.51", c: "#fff", tight: true },
  { label: "Global OI (9 Exch):", value: "$15.50B", c: "#fff", tight: true },
  { label: "Funding 8H:", value: "0.0023%", c: TEAL, tight: true },
  { label: "Market State:", value: "54/100 (Neutral)", c: LINE_BLUE },
  { label: "OB Imbalance:", value: "-$2.3M", c: RED, tight: true },
  { label: "Phase(1H):", value: "Long Build-up", c: TEAL },
];

const withGaps = <T extends { x: number; w: number }>(items: T[], start: number) =>
  items.map((it, i) => ({ ...it, ml: it.x - (i ? items[i - 1].x + items[i - 1].w : start) }));

type ToolDef = { x: number; w: number; node: React.ReactNode; active?: boolean };
const tf = (t: string) => <BlueLabel>{t}</BlueLabel>;
const tools: ToolDef[] = [
  { x: 116, w: 5, node: <Grip /> },
  { x: 130, w: 56, node: <><IconChartType /><Arrow /></> },
  { x: 192, w: 58, node: <><IconTablet /><Arrow /></> },
  { x: 265, w: 36, node: <IconDollar /> },
  { x: 312, w: 1, node: <Sep /> },
  { x: 323, w: 40, node: <IdeLabel>IDE</IdeLabel> },
  { x: 380, w: 34, node: <IconBag /> },
  { x: 432, w: 38, node: <IconSignal /> },
  { x: 485, w: 40, node: <IconCloud /> },
  { x: 540, w: 42, node: <IconGlobe /> },
  { x: 588, w: 1, node: <Sep /> },
  { x: 593, w: 188, active: true, node: <><IconPlay /><span>Algo Trading</span></> },
  { x: 792, w: 150, node: <><IconOrder /><span>New Order</span></> },
  { x: 959, w: 1, node: <Sep /> },
  { x: 973, w: 36, node: <IconBars /> },
  { x: 1018, w: 51, active: true, node: <IconCandles /> },
  { x: 1080, w: 36, node: <IconLine /> },
  { x: 1127, w: 1, node: <Sep /> },
  { x: 1140, w: 36, node: <IconZoom plus /> },
  { x: 1195, w: 36, node: <IconZoom /> },
  { x: 1248, w: 36, node: <IconGrid /> },
  { x: 1296, w: 1, node: <Sep /> },
  { x: 1300, w: 51, active: true, node: <IconShift /> },
  { x: 1354, w: 51, active: true, node: <IconShift flip /> },
  { x: 1410, w: 1, node: <Sep /> },
  { x: 1420, w: 40, node: <IconShot /> },
  { x: 1470, w: 6, node: <Grip /> },
  { x: 1483, w: 51, active: true, node: <IconCursor /> },
  { x: 1544, w: 37, node: <IconCross /> },
  { x: 1591, w: 1, node: <Sep /> },
  { x: 1612, w: 20, node: <IconVLine /> },
  { x: 1656, w: 40, node: <IconHLine /> },
  { x: 1710, w: 40, node: <IconTrend /> },
  { x: 1764, w: 40, node: <IconChannel /> },
  { x: 1818, w: 40, node: <IconFibo /> },
  { x: 1878, w: 28, node: <IconText /> },
  { x: 1925, w: 54, node: <><IconShapes /><Arrow /></> },
  { x: 1986, w: 6, node: <Grip /> },
  { x: 1999, w: 51, active: true, node: tf("M1") },
  { x: 2062, w: 36, node: tf("M5") },
  { x: 2110, w: 48, node: tf("M15") },
  { x: 2164, w: 48, node: tf("M30") },
  { x: 2224, w: 34, node: tf("H1") },
  { x: 2279, w: 34, node: tf("H4") },
  { x: 2332, w: 34, node: tf("D1") },
  { x: 2385, w: 36, node: tf("W1") },
  { x: 2438, w: 40, node: tf("MN") },
  { x: 2731, w: 30, node: <IconSearch /> },
  { x: 2790, w: 30, node: <IconUser /> },
  { x: 2849, w: 36, node: <IconLevel /> },
  { x: 2894, w: 75, node: <LevelBar /> },
];

type TabDef = { x: number; w: number; t?: string; on?: boolean; node?: React.ReactNode };
const tabs: TabDef[] = [
  { x: 175, w: 70, t: "Trade" },
  { x: 252, w: 1 },
  { x: 272, w: 120, t: "Exposure" },
  { x: 401, w: 90, t: "History" },
  { x: 509, w: 65, t: "News" },
  { x: 582, w: 1 },
  { x: 602, w: 100, t: "Mailbox" },
  { x: 715, w: 100, t: "Calendar" },
  { x: 842, w: 100, t: "Company" },
  { x: 953, w: 1 },
  { x: 972, w: 80, t: "Alerts" },
  { x: 1067, w: 100, t: "Articles" },
  { x: 1176, w: 110, t: "Code Base" },
  { x: 1300, w: 113, t: "Experts", on: true },
  { x: 1432, w: 90, t: "Journal" },
  { x: 2516, w: 102, node: <><IconBag s={0.7} /><MarketLabel>Market</MarketLabel></> },
  { x: 2638, w: 108, node: <><IconSignal s={0.86} /><GreyLabel>Signals</GreyLabel></> },
  { x: 2767, w: 76, node: <><IconCloud s={0.8} /><DarkLabel>VPS</DarkLabel></> },
  { x: 2864, w: 100, node: <><IconChip /><DarkLabel>Tester</DarkLabel></> },
];

const statusCells: [number, string][] = [
  [1527, "For Help, press F1"],
  [250, "Euro"],
  [140, ""],
  [134, ""],
  [201, ""],
  [134, ""],
  [135, ""],
  [132, ""],
];

const App: React.FC = () => (
  <>
    <GlobalStyle />
    <Page>
      <Window>
        <TitleBar>
          <Lights>
            <Light $c="#ee6a5f" />
            <Light $c="#f5bd4f" />
            <Light $c="#61c454" />
          </Lights>
          2121950602 - XBTFX-MetaTrader5: Demo Account - Hedge - XBTFX LLC - BTCUSD,M1
        </TitleBar>
        <MenuBar>
          <span><u>F</u>ile</span>
          <span><u>V</u>iew</span>
          <span><u>I</u>nsert</span>
          <span><u>C</u>harts</span>
          <span><u>T</u>ools</span>
          <span><u>W</u>indow</span>
          <span><u>H</u>elp</span>
        </MenuBar>
        <Toolbar>
          {withGaps(tools, 113).map((t) => (
            <Tool key={t.x} $ml={t.ml} $w={t.w} $active={t.active}>{t.node}</Tool>
          ))}
        </Toolbar>
        <Workspace>
          <NavStrip>
            <NavClose>X</NavClose>
            <NavBody>
              <NavChevron $mt={320} width="18" height="10" viewBox="0 0 18 10"><path d="M1 1L9 9L17 1" stroke="#222" strokeWidth="1.6" fill="none" /></NavChevron>
              <NavChevron $mt={483} width="18" height="10" viewBox="0 0 18 10"><path d="M1 1L9 9L17 1" stroke="#222" strokeWidth="1.6" fill="none" /></NavChevron>
              <NavToggle>›</NavToggle>
            </NavBody>
          </NavStrip>
          <ChartWindow $w={1372} $active>
            <TabBar $active $pl={16}>
              <IconCandles s={0.85} />
              BTCUSD,M1
              <WinButtons $gap={45} $pr={30}>
                <IconMin c="#111" />
                <IconMax c="#111" />
                <IconClose c="#111" />
              </WinButtons>
            </TabBar>
            <Frame $ml={2} $pl={3} $w={1364}>
              <PaneRow $h={520} $mb={1}>
                <Plot $w={1246}>
                  <View x={LEFT_X} y={276} w={LEFT_W} h={518}>
                    <GridV xs={leftGrid} y0={276} y1={794} c="#c4c8cc" />
                    <GridH ys={leftMainY} x0={147} x1={1391} />
                    <path d="M147 395.5H1391" stroke={PURPLE} strokeWidth={2.5} />
                    <path d="M147 418.5H1391" stroke="#8d99a6" strokeWidth={1} />
                    <ellipse cx={1106} cy={353.5} rx={15} ry={16} fill={RED} />
                    <ellipse cx={1106} cy={381.5} rx={15} ry={15} fill={RED} />
                    {lCandles.map((c, k) => (
                      <Candle key={k} x={570.5 + 8 * k} wt={lC45(c[0])} wb={lC45(c[1])} bt={lC45(c[2])} bb={lC45(c[3])} bear={c[4] === 1} />
                    ))}
                    <Line p={lMa} c={LINE_BLUE} />
                    <UpArrow x={778} y0={412} y1={440} />
                    <VolumeMark x={1160} y={572} t="3.8M" />
                    <Marker x={1138} />
                  </View>
                  <TimeTag $x={871}>17:00</TimeTag>
                  <TimeTag $x={418}>00</TimeTag>
                  <StatsPanel stats={btcStats} whale="BUY $566.9k @ 68253" whaleC={TEAL} />
                  <Brand>QuantumPro<IconHat /></Brand>
                </Plot>
                <Axis>
                  {[
                    ["68437.570", 6.5], ["68361.115", 70.5], ["68284.660", 134.5], ["68208.205", 198.5],
                    ["68131.750", 262.5], ["68055.295", 326.5], ["67978.840", 390.5], ["67902.385", 454.5],
                  ].map(([t, y]) => <AxisLabel key={t} $y={y as number} $tick>{t}</AxisLabel>)}
                  <PriceTag $y={132} $w={98}>68274.152</PriceTag>
                </Axis>
              </PaneRow>
              {leftPanes.map((p) => <Pane key={p.top} def={p} x={LEFT_X} w={LEFT_W} plotW={1246} />)}
              <TimeAxis $pl={1}>
                {["7 Apr 2026", "7 Apr 15:27", "7 Apr 15:43", "7 Apr 15:59", "7 Apr 16:15", "7 Apr 16:31", "7 Apr 16:47", "7 Apr 17:03"].map((t) => (
                  <TimeCell key={t}>{t}</TimeCell>
                ))}
              </TimeAxis>
            </Frame>
          </ChartWindow>
          <ChartWindow $w={1469}>
            <TabBar $pl={17}>
              <IconCandles s={0.85} />
              ETHUSD,M1
              <WinButtons $gap={44} $pr={26}>
                <IconMin c="#bdbdbd" />
                <IconMax c="#bdbdbd" />
                <IconClose c="#bdbdbd" />
              </WinButtons>
            </TabBar>
            <Frame $ml={2} $pl={2} $w={1464}>
              <PaneRow $h={522} $mb={1}>
                <Plot $w={1357}>
                  <View x={RIGHT_X} y={276} w={RIGHT_W} h={520}>
                    <GridV xs={rightGrid} y0={276} y1={796} c="#9aa3ad" />
                    <GridH ys={rightMainY} x0={1520} x1={2875} c="#9aa3ad" />
                    <path d="M1520 307.5H2875" stroke={PURPLE} strokeWidth={2.5} />
                    <path d="M1520 439.5H2875" stroke="#8d99a6" strokeWidth={1} />
                    <ellipse cx={rz(1112)} cy={rC10(205)} rx={19} ry={18} fill={RED} />
                    <ellipse cx={rz(1120)} cy={rC10(265)} rx={14} ry={16} fill={RED} />
                    <ellipse cx={rz(1135)} cy={rC10(325)} rx={21} ry={16} fill={RED} />
                    <ellipse cx={rz(1125)} cy={rC10(375)} rx={15} ry={15} fill={RED} />
                    <ellipse cx={rz(1115)} cy={rC10(445)} rx={14} ry={14} fill={TEAL} />
                    {rCandles.map((c) => (
                      <Candle key={c[0]} x={rz(c[0])} wt={rC10(c[1])} wb={rC10(c[2])} bt={rC10(c[3])} bb={rC10(c[4])} bear={c[5] === 1} />
                    ))}
                    <Line p={rMa.map(([x, z]) => [rz(x), rC10(z)])} c={LINE_BLUE} />
                    <UpArrow x={2218} y0={470} y1={498} />
                    <VolumeMark x={2631} y={602} t="3.3M" />
                    <Marker x={2608} />
                  </View>
                  <StatsPanel stats={ethStats} whale="SELL $627.3k @ 2082" whaleC={RED} />
                  <Brand>QuantumPro<IconHat /></Brand>
                </Plot>
                <Axis>
                  {[
                    ["2089.240", 9.5], ["2085.995", 73.5], ["2082.750", 137.5], ["2079.505", 201.5],
                    ["2076.260", 265.5], ["2073.015", 329.5], ["2069.770", 393.5], ["2066.525", 457.5],
                  ].map(([t, y]) => <AxisLabel key={t} $y={y as number} $tick>{t}</AxisLabel>)}
                  <PriceTag $y={153} $w={88}>2081.375</PriceTag>
                </Axis>
              </PaneRow>
              {rightPanes.map((p) => <Pane key={p.top} def={p} x={RIGHT_X} w={RIGHT_W} plotW={1357} />)}
              <TimeAxis $pl={1}>
                {["7 Apr 2026", "7 Apr 15:15", "7 Apr 15:31", "7 Apr 15:47", "7 Apr 16:03", "7 Apr 16:19", "7 Apr 16:35", "7 Apr 16:51", "7 Apr 17:07"].map((t) => (
                  <TimeCell key={t}>{t}</TimeCell>
                ))}
              </TimeAxis>
            </Frame>
          </ChartWindow>
        </Workspace>
        <Toolbox>
          <ToolboxSide>
            <ToolboxX>X</ToolboxX>
            <ToolboxName>To:</ToolboxName>
          </ToolboxSide>
          <ToolboxMain>
            <LogHeader>
              <LogCol $w={321}>Time</LogCol>
              <LogCol $w={359}>Source</LogCol>
              <LogCol $w={300} $mono>Message</LogCol>
            </LogHeader>
            <TabRow>
              {withGaps(tabs, 148).map((t) =>
                t.w === 1 ? (
                  <BottomTab key={t.x} $ml={t.ml} $w={1} $sep />
                ) : (
                  <BottomTab key={t.x} $ml={t.ml} $w={t.w} $on={t.on} $low={!t.t}>{t.t ?? t.node}</BottomTab>
                ),
              )}
            </TabRow>
          </ToolboxMain>
        </Toolbox>
        <StatusBar>
          {statusCells.map(([w, t], i) => (
            <StatusCell key={i} $w={w} $first={i === 0}>{t}</StatusCell>
          ))}
          <StatusCell $w={216}><IconBarsSignal />4927 / 11 Kb</StatusCell>
          <ResizeGrip width="18" height="18" viewBox="0 0 18 18" fill="#c5c5c5">
            <rect x="12" y="0" width="5" height="5" /><rect x="6" y="6" width="5" height="5" /><rect x="12" y="6" width="5" height="5" /><rect x="0" y="12" width="5" height="5" /><rect x="6" y="12" width="5" height="5" />
          </ResizeGrip>
        </StatusBar>
      </Window>
    </Page>
  </>
);

export default App;
